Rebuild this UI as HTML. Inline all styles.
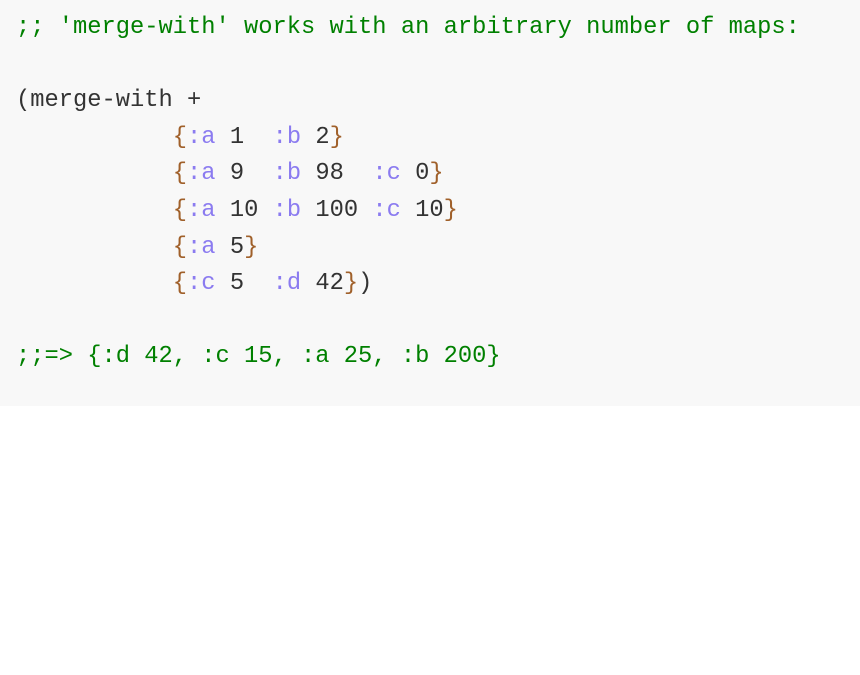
<!DOCTYPE html>
<html><head><style>
html,body{margin:0;padding:0;background:#fff;width:860px;height:675px;overflow:hidden}
pre{margin:0;background:#f8f8f8;height:406px;box-sizing:border-box;padding:10px 0 0 16px;font-family:"Liberation Mono",monospace;font-size:23.75px;line-height:36.6px;color:#333}
.c{color:#008000}.b{color:#a0602a}.k{color:#8b7bf0}
</style></head><body><pre><span class="c">;; 'merge-with' works with an arbitrary number of maps:</span>

(merge-with +
           <span class="b">{</span><span class="k">:a</span> 1  <span class="k">:b</span> 2<span class="b">}</span>
           <span class="b">{</span><span class="k">:a</span> 9  <span class="k">:b</span> 98  <span class="k">:c</span> 0<span class="b">}</span>
           <span class="b">{</span><span class="k">:a</span> 10 <span class="k">:b</span> 100 <span class="k">:c</span> 10<span class="b">}</span>
           <span class="b">{</span><span class="k">:a</span> 5<span class="b">}</span>
           <span class="b">{</span><span class="k">:c</span> 5  <span class="k">:d</span> 42<span class="b">}</span>)

<span class="c">;;=&gt; {:d 42, :c 15, :a 25, :b 200}</span></pre></body></html>
